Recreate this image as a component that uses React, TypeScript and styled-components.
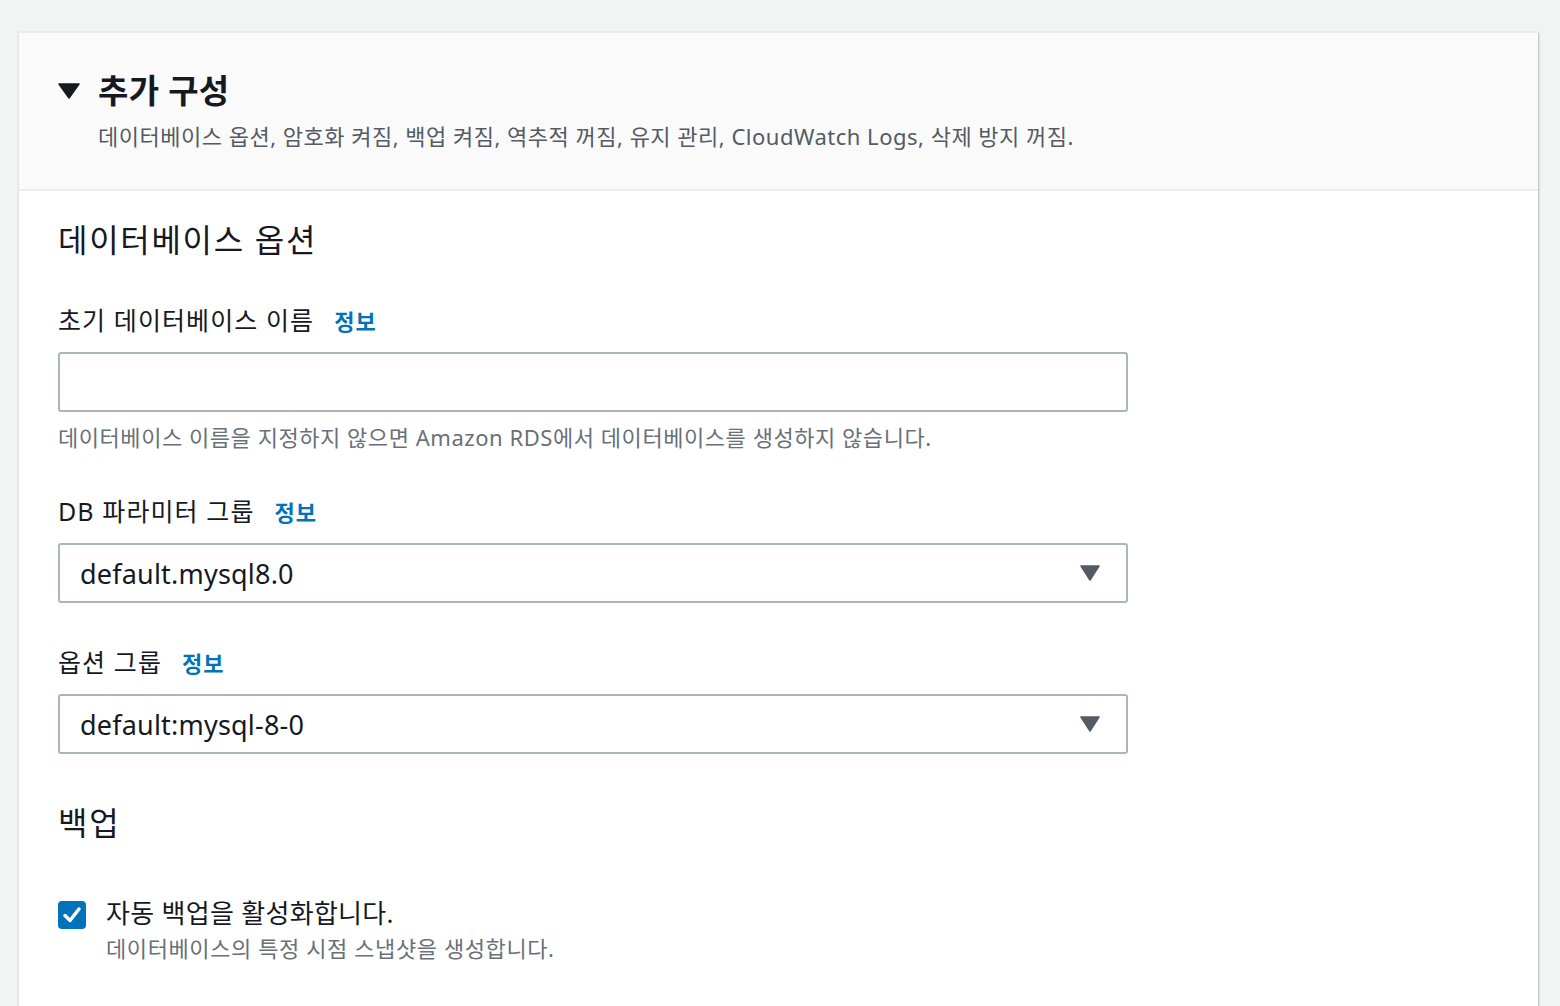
import styled, { createGlobalStyle } from "styled-components";

const GlobalStyle = createGlobalStyle`
  html, body {
    margin: 0;
    padding: 0;
    background: #f2f3f3;
    font-family: "Noto Sans", "Noto Sans CJK KR", sans-serif;
    color: #16191f;
  }
`;

const Page = styled.div`
  height: 1006px;
  overflow: hidden;
  padding: 32px 22px 0 18px;
  box-sizing: border-box;
`;

const Card = styled.div`
  background: #ffffff;
  min-height: 1100px;
  border-left: 1px solid #e4e7e7;
  box-shadow: 1px 1px 2px rgba(0, 28, 36, 0.25), 0 0 1px rgba(0, 28, 36, 0.15);
`;

const Header = styled.div`
  background: #fafafa;
  border-top: 1px solid #eaeded;
  border-bottom: 2px solid #eaeded;
  height: 159px;
  box-sizing: border-box;
  padding: 36px 0 0 39px;
`;

const TitleRow = styled.div`
  display: flex;
  align-items: center;
  gap: 18px;
  height: 44px;
`;

const Caret = styled.svg`
  width: 22px;
  height: 16px;
  flex: none;
`;

const Title = styled.h2`
  margin: 0;
  font-size: 33px;
  font-weight: 700;
  line-height: 44px;
  letter-spacing: 0.3px;
`;

const Subtitle = styled.div`
  margin: 8px 0 0 40px;
  font-size: 22px;
  line-height: 30px;
  letter-spacing: 0.5px;
  color: #545b64;
`;

const Body = styled.div`
  padding: 23px 40px 0 39px;
  width: 1070px;
`;

const SectionTitle = styled.h3<{ $top?: number }>`
  margin: ${(p) => p.$top ?? 0}px 0 0 0;
  font-size: 32px;
  font-weight: 400;
  line-height: 52px;
  letter-spacing: 1.7px;
`;

const Field = styled.div<{ $top: number }>`
  margin-top: ${(p) => p.$top}px;
`;

const Label = styled.div`
  display: flex;
  align-items: baseline;
  gap: 20px;
  font-size: 25px;
  line-height: 36px;
  letter-spacing: 1.1px;
  margin-bottom: 13px;
`;

const Info = styled.a`
  font-size: 22px;
  font-weight: 700;
  letter-spacing: 1px;
  color: #0073bb;
  text-decoration: none;
`;

const TextInput = styled.input`
  display: block;
  width: 100%;
  height: 60px;
  box-sizing: border-box;
  border: 2px solid #aab7b8;
  border-radius: 3px;
  background: #ffffff;
  font: inherit;
  font-size: 26px;
  padding: 0 20px;
  outline: none;
`;

const Hint = styled.div`
  margin-top: 9px;
  font-size: 22px;
  line-height: 32px;
  letter-spacing: 0.55px;
  color: #687078;
`;

const Select = styled.div`
  display: flex;
  align-items: center;
  justify-content: space-between;
  height: 60px;
  box-sizing: border-box;
  border: 2px solid #aab7b8;
  border-radius: 3px;
  padding: 0 26px 0 20px;
  font-size: 27px;
  letter-spacing: 0.2px;
`;

const CheckRow = styled.div`
  display: flex;
  align-items: flex-start;
  gap: 20px;
  margin-top: 45px;
`;

const Box = styled.div`
  width: 28px;
  height: 28px;
  flex: none;
  margin-top: 7px;
  background: #0073bb;
  border-radius: 4px;
  display: flex;
  align-items: center;
  justify-content: center;
`;

const CheckText = styled.div`
  display: flex;
  flex-direction: column;
`;

const CheckLabel = styled.div`
  font-size: 26px;
  line-height: 38px;
  letter-spacing: 0.3px;
`;

const CheckHint = styled.div`
  font-size: 22px;
  line-height: 32px;
  letter-spacing: 0.6px;
  color: #687078;
`;

const DownArrow = () => (
  <svg width="20" height="16" viewBox="0 0 20 16">
    <path d="M1 1h18L10 15z" fill="#545b64" stroke="#545b64" strokeWidth="1.5" strokeLinejoin="round" />
  </svg>
);

export default function App() {
  return (
    <>
      <GlobalStyle />
      <Page>
        <Card>
          <Header>
            <TitleRow>
              <Caret viewBox="0 0 22 16">
                <path d="M1 1h20L11 15z" fill="#16191f" stroke="#16191f" strokeWidth="1.5" strokeLinejoin="round" />
              </Caret>
              <Title>추가 구성</Title>
            </TitleRow>
            <Subtitle>
              데이터베이스 옵션, 암호화 켜짐, 백업 켜짐, 역추적 꺼짐, 유지 관리, CloudWatch Logs, 삭제 방지 꺼짐.
            </Subtitle>
          </Header>
          <Body>
            <SectionTitle>데이터베이스 옵션</SectionTitle>
            <Field $top={36}>
              <Label>
                초기 데이터베이스 이름 <Info href="#">정보</Info>
              </Label>
              <TextInput type="text" />
              <Hint>데이터베이스 이름을 지정하지 않으면 Amazon RDS에서 데이터베이스를 생성하지 않습니다.</Hint>
            </Field>
            <Field $top={40}>
              <Label>
                DB 파라미터 그룹 <Info href="#">정보</Info>
              </Label>
              <Select>
                <span>default.mysql8.0</span>
                <DownArrow />
              </Select>
            </Field>
            <Field $top={41}>
              <Label>
                옵션 그룹 <Info href="#">정보</Info>
              </Label>
              <Select>
                <span>default:mysql-8-0</span>
                <DownArrow />
              </Select>
            </Field>
            <SectionTitle $top={43}>백업</SectionTitle>
            <CheckRow>
              <Box>
                <svg width="20" height="18" viewBox="0 0 20 18">
                  <path d="M3 9.5l5 5L17 3" fill="none" stroke="#ffffff" strokeWidth="3.5" strokeLinecap="round" strokeLinejoin="round" />
                </svg>
              </Box>
              <CheckText>
                <CheckLabel>자동 백업을 활성화합니다.</CheckLabel>
                <CheckHint>데이터베이스의 특정 시점 스냅샷을 생성합니다.</CheckHint>
              </CheckText>
            </CheckRow>
          </Body>
        </Card>
      </Page>
    </>
  );
}
